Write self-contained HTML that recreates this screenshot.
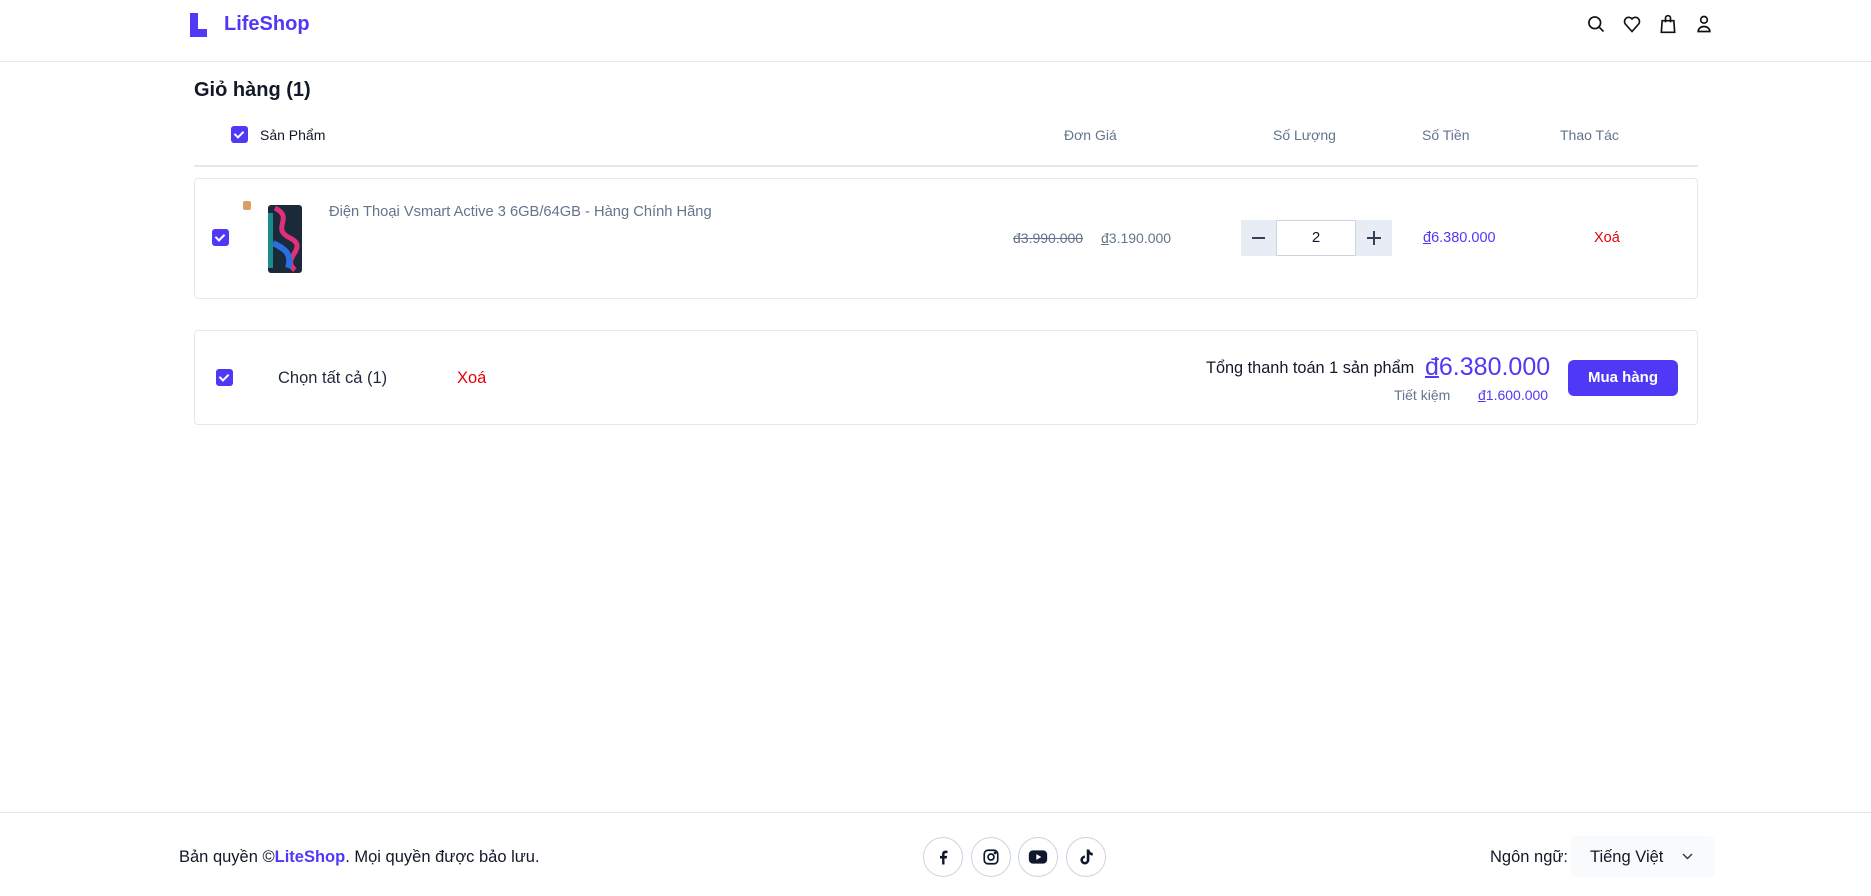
<!DOCTYPE html>
<html><head><meta charset="utf-8"><style>
*{margin:0;padding:0;box-sizing:border-box}
body{width:1871px;height:896px;background:#fff;font-family:"Liberation Sans",sans-serif;position:relative;overflow:hidden;color:#111827}
.a{position:absolute;white-space:nowrap}
.cb{position:absolute;width:17px;height:17px;background:#4f39f6;border-radius:3px}
.cb:after{content:"";position:absolute;left:5px;top:3px;width:4px;height:7px;border:solid #fff;border-width:0 2px 2px 0;transform:rotate(45deg)}
.gray{color:#64748b}
.pr{color:#4f39f6}
.red{color:#e7000b}
.d{text-decoration:underline;text-underline-offset:1px}
.soc{position:absolute;top:837px;width:40px;height:40px;border:1px solid #cbd5e1;border-radius:50%;display:flex;align-items:center;justify-content:center}
</style></head><body>
<!-- header -->
<div class="a" style="left:190px;top:13px;width:8px;height:24px;background:#4f39f6"></div>
<div class="a" style="left:190px;top:29px;width:17px;height:8px;background:#4f39f6"></div>
<div class="a pr" style="left:224px;top:13px;font-size:20px;font-weight:bold;color:#4f39f6">LifeShop</div>
<svg class="a" style="left:1586px;top:14px" width="20" height="20" viewBox="0 0 24 24" fill="none" stroke="#111" stroke-width="2"><circle cx="10.5" cy="10.5" r="7"/><path d="M16 16l5 5"/></svg>
<svg class="a" style="left:1622px;top:14px" width="20" height="20" viewBox="0 0 24 24" fill="none" stroke="#111" stroke-width="2"><path d="M12 21l-8-9a5 5 0 017-7l1 1 1-1a5 5 0 017 7z"/></svg>
<svg class="a" style="left:1658px;top:13px" width="20" height="22" viewBox="0 0 24 24" fill="none" stroke="#111" stroke-width="2"><path d="M5 8h14l1 14H4z"/><path d="M9 10V5a3 3 0 016 0v5"/></svg>
<svg class="a" style="left:1694px;top:13px" width="20" height="22" viewBox="0 0 24 24" fill="none" stroke="#111" stroke-width="2"><circle cx="12" cy="7" r="4"/><path d="M5 21a7 6 0 0114 0z"/></svg>
<div class="a" style="left:0;top:61px;width:1871px;height:1px;background:#e5e7eb"></div>
<!-- title -->
<div class="a" style="left:194px;top:79px;font-size:20px;font-weight:bold">Giỏ hàng (1)</div>
<div class="cb" style="left:231px;top:126px"></div>
<div class="a" style="left:260px;top:127px;font-size:14px">Sản Phẩm</div>
<div class="a gray" style="left:1064px;top:127px;font-size:14px">Đơn Giá</div>
<div class="a gray" style="left:1273px;top:127px;font-size:14px">Số Lượng</div>
<div class="a gray" style="left:1422px;top:127px;font-size:14px">Số Tiền</div>
<div class="a gray" style="left:1560px;top:127px;font-size:14px">Thao Tác</div>
<div class="a" style="left:194px;top:165px;width:1504px;height:2px;background:#e5e7eb"></div>
<!-- item -->
<div class="a" style="left:194px;top:178px;width:1504px;height:121px;border:1px solid #e5e7eb;border-radius:4px"></div>
<div class="cb" style="left:212px;top:229px"></div>
<div class="a" style="left:243px;top:201px;width:8px;height:9px;background:#d9a066;border-radius:2px"></div>
<svg class="a" style="left:265px;top:203px" width="40" height="72" viewBox="0 0 40 72"><rect x="3" y="2" width="34" height="68" rx="3" fill="#1b2a3a"/><path d="M10 5c20 10-5 20 15 30s-10 20 5 32" stroke="#e0307a" stroke-width="5" fill="none"/><path d="M8 40c10 5 20 10 15 25" stroke="#2a6fe0" stroke-width="6" fill="none"/><rect x="3" y="10" width="5" height="55" fill="#1d8b8b"/></svg>
<div class="a gray" style="left:329px;top:204px;font-size:14.7px">Điện Thoại Vsmart Active 3 6GB/64GB - Hàng Chính Hãng</div>
<div class="a gray" style="left:1013px;top:230px;font-size:14px;text-decoration:line-through">đ3.990.000</div>
<div class="a gray" style="left:1101px;top:230px;font-size:14px"><span class="d">đ</span>3.190.000</div>
<div class="a" style="left:1241px;top:220px;width:151px;height:36px;background:#e8ecf4"></div>
<div class="a" style="left:1276px;top:220px;width:80px;height:36px;background:#fff;border:1px solid #cbd5e1;text-align:center;line-height:34px;font-size:15px">2</div>
<div class="a" style="left:1252px;top:237px;width:13px;height:2px;background:#334155"></div>
<div class="a" style="left:1367px;top:237px;width:14px;height:2px;background:#334155"></div>
<div class="a" style="left:1373px;top:231px;width:2px;height:14px;background:#334155"></div>
<div class="a pr" style="left:1423px;top:230px;font-size:14.5px"><span class="d">đ</span>6.380.000</div>
<div class="a red" style="left:1594px;top:230px;font-size:14.5px">Xoá</div>
<!-- summary -->
<div class="a" style="left:194px;top:330px;width:1504px;height:95px;border:1px solid #e5e7eb;border-radius:4px"></div>
<div class="cb" style="left:216px;top:369px"></div>
<div class="a" style="left:278px;top:369px;font-size:16.5px;color:#1e293b">Chọn tất cả (1)</div>
<div class="a red" style="left:457px;top:369px;font-size:16.5px">Xoá</div>
<div class="a" style="left:1206px;top:359px;font-size:16.3px">Tổng thanh toán 1 sản phẩm</div>
<div class="a pr" style="left:1425px;top:353px;font-size:25px"><span class="d">đ</span>6.380.000</div>
<div class="a gray" style="left:1394px;top:387px;font-size:14px">Tiết kiệm</div>
<div class="a pr" style="left:1478px;top:387px;font-size:14px"><span class="d">đ</span>1.600.000</div>
<div class="a" style="left:1568px;top:360px;width:110px;height:36px;background:#4f39f6;border-radius:6px;color:#fff;font-weight:bold;font-size:15px;text-align:center;line-height:36px">Mua hàng</div>
<!-- footer -->
<div class="a" style="left:0;top:812px;width:1871px;height:1px;background:#e5e7eb"></div>
<div class="a" style="left:179px;top:848px;font-size:16.5px">Bản quyền ©<span class="pr" style="font-weight:bold">LiteShop</span>. Mọi quyền được bảo lưu.</div>
<div class="soc" style="left:923px"><svg width="18" height="20" viewBox="0 0 24 24"><path d="M14 22v-8h3l.5-3.5H14V8.5c0-1 .3-1.7 1.8-1.7H18V3.6c-.4 0-1.5-.1-2.7-.1-2.7 0-4.5 1.6-4.5 4.6v2.4H8V14h2.8v8z" fill="#0f172a"/></svg></div>
<div class="soc" style="left:971px"><svg width="18" height="18" viewBox="0 0 24 24" fill="none" stroke="#0f172a" stroke-width="2.2"><rect x="3" y="3" width="18" height="18" rx="5"/><circle cx="12" cy="12" r="4"/><circle cx="17.5" cy="6.5" r=".8" fill="#0f172a"/></svg></div>
<div class="soc" style="left:1018px"><svg width="20" height="16" viewBox="0 0 24 18"><rect x="1" y="1" width="22" height="16" rx="5" fill="#0f172a"/><path d="M10 5.5v7l6-3.5z" fill="#fff"/></svg></div>
<div class="soc" style="left:1066px"><svg width="18" height="18" viewBox="0 0 24 24"><path d="M13 2h3.5c.3 2.5 2 4.3 4.5 4.5V10c-1.7 0-3.2-.5-4.5-1.4V16a6 6 0 11-6-6v3.5a2.5 2.5 0 102.5 2.5z" fill="#0f172a"/></svg></div>
<div class="a" style="left:1490px;top:848px;font-size:16.5px">Ngôn ngữ:</div>
<div class="a" style="left:1570px;top:836px;width:145px;height:41px;background:#f8fafc;border-radius:6px"></div>
<div class="a" style="left:1590px;top:848px;font-size:16.5px">Tiếng Việt</div>
<svg class="a" style="left:1682px;top:853px" width="11" height="7" viewBox="0 0 11 7" fill="none" stroke="#333" stroke-width="1.4"><path d="M1 1l4.5 4.5L10 1"/></svg>
</body></html>
